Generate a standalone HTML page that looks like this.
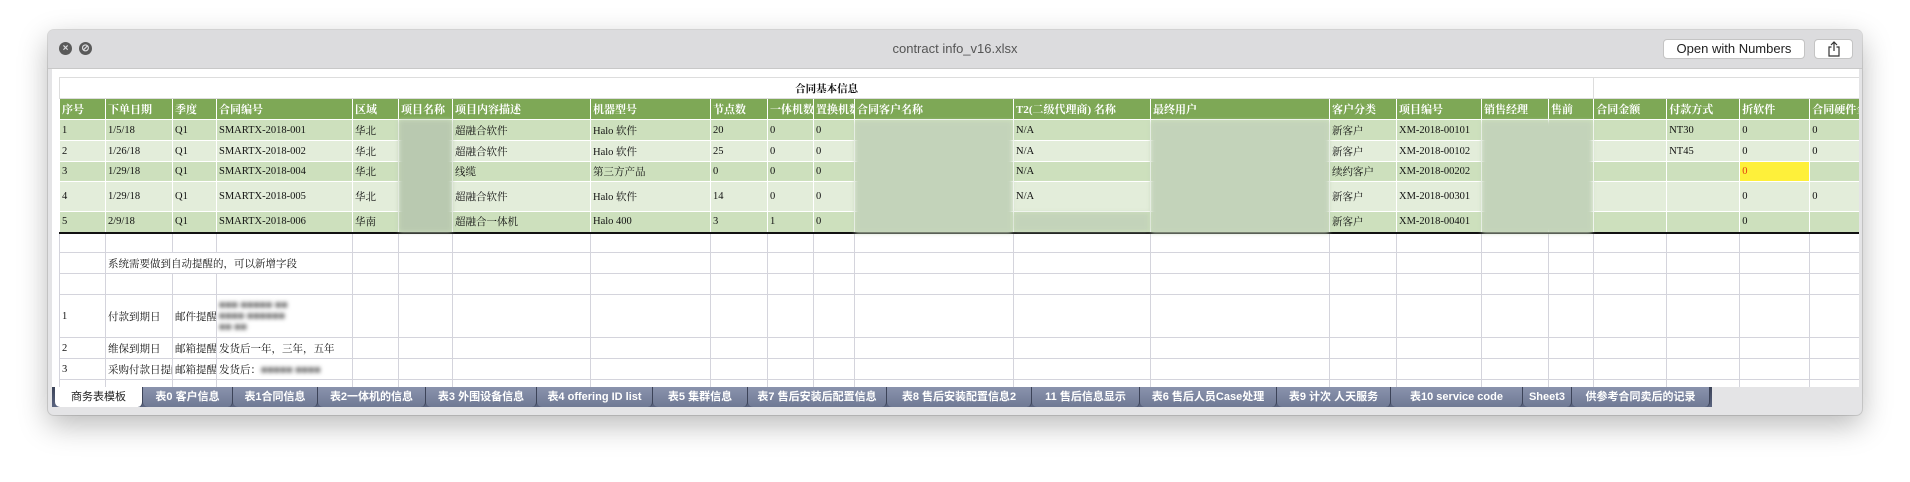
<!DOCTYPE html>
<html><head><meta charset="utf-8"><style>
*{margin:0;padding:0;box-sizing:border-box}
body{width:1910px;height:482px;background:#fff;position:relative;overflow:hidden;font-family:"Liberation Serif","Noto Serif CJK SC",serif}
.win{position:absolute;left:48px;top:30px;width:1814px;height:385px;border-radius:6px;background:#e4e4e6;box-shadow:0 10px 30px rgba(0,0,0,.28),0 0 0 1px rgba(0,0,0,.12)}
.tb{position:absolute;left:0;top:0;width:100%;height:39px;background:#dcdcde;border-bottom:1px solid #c8c8c8;border-radius:6px 6px 0 0}
.dot{position:absolute;top:12px;width:13px;height:13px;border-radius:50%;background:#5a5a5a;color:#dcdcde;font:bold 10px/13px "Liberation Sans",sans-serif;text-align:center}
.title{position:absolute;left:0;width:100%;top:11px;text-align:center;font:13px "Liberation Sans",sans-serif;color:#555}
.btn{position:absolute;top:9px;height:20px;background:#fff;border:1px solid #c4c4c4;border-radius:4px;font:13px/18px "Liberation Sans",sans-serif;color:#222;text-align:center}
.content{position:absolute;left:4px;top:39px;width:1807px;height:318px;background:#fff}
.grid{position:absolute;left:59px;top:77px;width:1800px;height:310px;overflow:hidden}
table{border-collapse:collapse;table-layout:fixed;width:1810px;font-size:10.5px;color:#111}
td{border:1px solid #d4d4dc;padding:0 2px;white-space:nowrap;overflow:hidden;vertical-align:middle}
tr.h td{background:#7ea856;color:#fff;font-weight:bold;font-size:11px;border-color:#fff}
tr.a td{background:#cde0bd;border-color:#fff}
tr.b td{background:#e3edda;border-color:#fff}
tr.last td{border-bottom:2px solid #111}
.bl{position:absolute;background:#b9c9b0;filter:blur(2px)}
.bt{color:#666;filter:blur(2px)}
.tabs{position:absolute;left:52px;top:387px;width:1660px;height:20px;background:linear-gradient(#3c4358,#5a6480)}
.tab{position:absolute;top:0;height:20px;background:linear-gradient(#8a93ad,#6f7994);color:#fff;font:bold 11px/20px "Liberation Sans","Noto Sans CJK SC",sans-serif;text-align:center;border-right:1px solid #3c4358;border-radius:0 0 5px 5px;white-space:nowrap;overflow:hidden}
.tab.act{background:#fff;color:#222;font-weight:normal}
</style></head><body>
<div class="win">
 <div class="tb">
  <div class="dot" style="left:11px">×</div><div class="dot" style="left:31px">⊘</div>
  <div class="title">contract info_v16.xlsx</div>
  <div class="btn" style="left:1615px;width:142px">Open with Numbers</div>
  <div class="btn" style="left:1766px;width:39px"><svg width="14" height="16" viewBox="0 0 14 16" style="margin-top:1px"><path d="M7 1v9M4 4l3-3 3 3M4.5 6H2v9h10V6H9.5" fill="none" stroke="#333" stroke-width="1.2"/></svg></div>
 </div>
 <div class="content"></div>
</div>
<div class="grid">
<table>
<colgroup><col style="width:46px"><col style="width:67px"><col style="width:44px"><col style="width:136px"><col style="width:46px"><col style="width:54px"><col style="width:138px"><col style="width:120px"><col style="width:57px"><col style="width:46px"><col style="width:41px"><col style="width:159px"><col style="width:137px"><col style="width:179px"><col style="width:67px"><col style="width:85px"><col style="width:67px"><col style="width:45px"><col style="width:73px"><col style="width:73px"><col style="width:70px"><col style="width:60px"></colgroup>
<tr style="height:21px"><td colspan="18" style="text-align:center;font-weight:bold;border-color:#ddd">合同基本信息</td><td colspan="4" style="border-color:#ddd"></td></tr>
<tr class="h" style="height:21px"><td>序号</td><td>下单日期</td><td>季度</td><td>合同编号</td><td>区域</td><td>项目名称</td><td>项目内容描述</td><td>机器型号</td><td>节点数</td><td>一体机数</td><td>置换机数</td><td>合同客户名称</td><td>T2(二级代理商) 名称</td><td>最终用户</td><td>客户分类</td><td>项目编号</td><td>销售经理</td><td>售前</td><td>合同金额</td><td>付款方式</td><td>折软件</td><td>合同硬件金</td></tr>
<tr class="a" style="height:21px"><td>1</td><td>1/5/18</td><td>Q1</td><td>SMARTX-2018-001</td><td>华北</td><td></td><td>超融合软件</td><td>Halo 软件</td><td>20</td><td>0</td><td>0</td><td></td><td>N/A</td><td></td><td>新客户</td><td>XM-2018-00101</td><td></td><td></td><td></td><td>NT30</td><td>0</td><td>0</td></tr>
<tr class="b" style="height:21px"><td>2</td><td>1/26/18</td><td>Q1</td><td>SMARTX-2018-002</td><td>华北</td><td></td><td>超融合软件</td><td>Halo 软件</td><td>25</td><td>0</td><td>0</td><td></td><td>N/A</td><td></td><td>新客户</td><td>XM-2018-00102</td><td></td><td></td><td></td><td>NT45</td><td>0</td><td>0</td></tr>
<tr class="a" style="height:20px"><td>3</td><td>1/29/18</td><td>Q1</td><td>SMARTX-2018-004</td><td>华北</td><td></td><td>线缆</td><td>第三方产品</td><td>0</td><td>0</td><td>0</td><td></td><td>N/A</td><td></td><td>续约客户</td><td>XM-2018-00202</td><td></td><td></td><td></td><td></td><td style="background:#fef03a;color:#e04010">0</td><td></td></tr>
<tr class="b" style="height:30px"><td>4</td><td>1/29/18</td><td>Q1</td><td>SMARTX-2018-005</td><td>华北</td><td></td><td>超融合软件</td><td>Halo 软件</td><td>14</td><td>0</td><td>0</td><td></td><td>N/A</td><td></td><td>新客户</td><td>XM-2018-00301</td><td></td><td></td><td></td><td></td><td>0</td><td>0</td></tr>
<tr class="a last" style="height:21px"><td>5</td><td>2/9/18</td><td>Q1</td><td>SMARTX-2018-006</td><td>华南</td><td></td><td>超融合一体机</td><td>Halo 400</td><td>3</td><td>1</td><td>0</td><td></td><td></td><td></td><td>新客户</td><td>XM-2018-00401</td><td></td><td></td><td></td><td></td><td>0</td><td></td></tr>
<tr style="height:20px"><td></td><td></td><td></td><td></td><td></td><td></td><td></td><td></td><td></td><td></td><td></td><td></td><td></td><td></td><td></td><td></td><td></td><td></td><td></td><td></td><td></td><td></td></tr>
<tr style="height:21px"><td></td><td colspan="3" style="overflow:visible">系统需要做到自动提醒的，可以新增字段</td><td></td><td></td><td></td><td></td><td></td><td></td><td></td><td></td><td></td><td></td><td></td><td></td><td></td><td></td><td></td><td></td><td></td><td></td></tr>
<tr style="height:21px"><td></td><td></td><td></td><td></td><td></td><td></td><td></td><td></td><td></td><td></td><td></td><td></td><td></td><td></td><td></td><td></td><td></td><td></td><td></td><td></td><td></td><td></td></tr>
<tr style="height:43px"><td>1</td><td>付款到期日</td><td>邮件提醒</td><td><span class="bt">■■■ ■■■■■ ■■<br>■■■■ ■■■■■■<br>■■ ■■</span></td><td></td><td></td><td></td><td></td><td></td><td></td><td></td><td></td><td></td><td></td><td></td><td></td><td></td><td></td><td></td><td></td><td></td><td></td></tr>
<tr style="height:21px"><td>2</td><td>维保到期日</td><td>邮箱提醒</td><td>发货后一年，三年，五年</td><td></td><td></td><td></td><td></td><td></td><td></td><td></td><td></td><td></td><td></td><td></td><td></td><td></td><td></td><td></td><td></td><td></td><td></td></tr>
<tr style="height:21px"><td>3</td><td>采购付款日提醒</td><td>邮箱提醒</td><td>发货后：<span class="bt">■■■■■ ■■■■</span></td><td></td><td></td><td></td><td></td><td></td><td></td><td></td><td></td><td></td><td></td><td></td><td></td><td></td><td></td><td></td><td></td><td></td><td></td></tr>
<tr style="height:21px"><td></td><td></td><td></td><td></td><td></td><td></td><td></td><td></td><td></td><td></td><td></td><td></td><td></td><td></td><td></td><td></td><td></td><td></td><td></td><td></td><td></td><td></td></tr>
</table>
<div class="bl" style="left:340px;top:43px;width:53px;height:112px"></div>
<div class="bl" style="left:796px;top:44px;width:157px;height:112px;background:#c3d3ba"></div>
<div class="bl" style="left:955px;top:136px;width:135px;height:18px;background:#c3d3ba"></div>
<div class="bl" style="left:1092px;top:44px;width:178px;height:112px;background:#c3d3ba"></div>
<div class="bl" style="left:1423px;top:44px;width:110px;height:112px;background:#c3d3ba"></div>
</div>
<div class="tabs">
<div class="tab act" style="left:3px;width:88px">商务表模板</div>
<div class="tab" style="left:91px;width:90px">表0 客户信息</div>
<div class="tab" style="left:181px;width:85px">表1合同信息</div>
<div class="tab" style="left:266px;width:108px">表2一体机的信息</div>
<div class="tab" style="left:374px;width:111px">表3 外围设备信息</div>
<div class="tab" style="left:485px;width:116px">表4 offering ID list</div>
<div class="tab" style="left:601px;width:95px">表5 集群信息</div>
<div class="tab" style="left:696px;width:139px">表7 售后安装后配置信息</div>
<div class="tab" style="left:835px;width:145px">表8 售后安装配置信息2</div>
<div class="tab" style="left:980px;width:108px">11 售后信息显示</div>
<div class="tab" style="left:1088px;width:137px">表6 售后人员Case处理</div>
<div class="tab" style="left:1225px;width:114px">表9 计次 人天服务</div>
<div class="tab" style="left:1339px;width:132px">表10 service code</div>
<div class="tab" style="left:1471px;width:49px">Sheet3</div>
<div class="tab" style="left:1520px;width:138px">供参考合同卖后的记录</div>
</div>
</body></html>
